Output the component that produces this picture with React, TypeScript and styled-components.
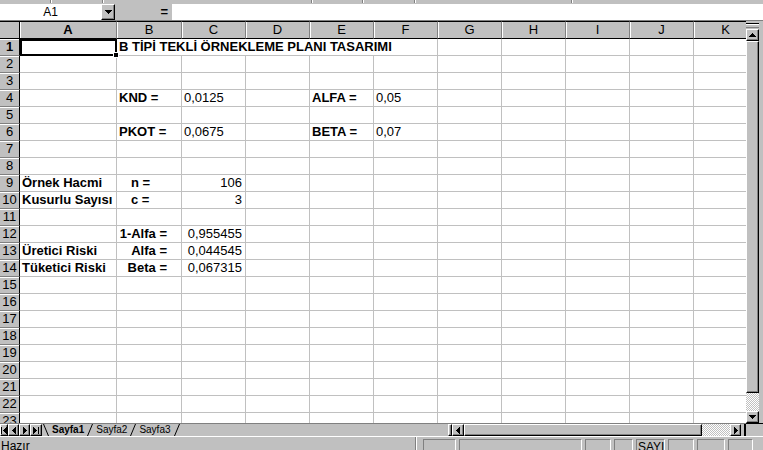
import React from 'react'
import styled, { createGlobalStyle, css } from 'styled-components'

const GlobalStyle = createGlobalStyle`
  html, body {
    margin: 0;
    padding: 0;
    background: #c0c0c0;
  }
  body {
    font-family: "Liberation Sans", Arial, sans-serif;
    font-size: 13px;
    color: #000;
  }
  * {
    box-sizing: border-box;
  }
`

const raised = css`
  background: #c0c0c0;
  border: 1px solid;
  border-color: #fff #000 #000 #fff;
  box-shadow: inset -1px -1px #808080;
`

const sunken = css`
  border: 1px solid;
  border-color: #808080 #fff #fff #808080;
`

const dither = css`
  background: repeating-conic-gradient(#fff 0 25%, #c0c0c0 0 50%) 0 0 / 2px 2px;
`

const Window = styled.div`
  width: 763px;
  height: 450px;
  overflow: hidden;
  background: #c0c0c0;
  display: flex;
  flex-direction: column;
`

const TopStrip = styled.div`
  flex: none;
  height: 3px;
  display: flex;
`

const ToolSeg = styled.div<{ $w: number }>`
  width: ${p => p.$w}px;
  border-right: 1px solid #808080;
  box-shadow: 1px 0 #fff;
`

const FormulaBar = styled.div`
  flex: none;
  height: 18px;
  display: flex;
  padding-top: 1px;
  border-bottom: 1px solid #808080;
`

const NameBox = styled.div`
  width: 101px;
  background: #fff;
  text-align: center;
  line-height: 16px;
  font-size: 12px;
`

const DropButton = styled.div`
  ${raised};
  width: 14px;
  display: flex;
  align-items: center;
  justify-content: center;
`

const EqualsBox = styled.div`
  width: 57px;
  text-align: right;
  padding-right: 4px;
  line-height: 16px;
  font-weight: bold;
`

const FormulaInput = styled.div`
  flex: 1;
  background: #fff;
`

const Main = styled.div`
  flex: none;
  height: 402px;
  display: flex;
`

const SheetView = styled.div`
  flex: none;
  width: 746px;
  overflow: hidden;
  background: #fff;
`

const Sheet = styled.div`
  display: grid;
  grid-template-columns: 20px 97px 65px repeat(9, 64px);
  grid-template-rows: 18px;
  grid-auto-rows: 17px;
  width: max-content;
`

const Corner = styled.div`
  background: #c0c0c0;
  border-top: 1px solid #000;
  border-bottom: 1px solid #000;
  border-right: 1px solid #000;
`

const ColHeader = styled.div<{ $active?: boolean }>`
  background: #c0c0c0;
  border-top: 1px solid #000;
  border-bottom: 1px solid #000;
  border-right: 1px solid #808080;
  box-shadow: inset 1px 0 #fff;
  text-align: center;
  line-height: 16px;
  font-weight: ${p => (p.$active ? 'bold' : 'normal')};
`

const RowHeader = styled.div<{ $active?: boolean }>`
  background: #c0c0c0;
  border-right: 1px solid #000;
  border-bottom: 1px solid #808080;
  box-shadow: inset 0 1px #fff;
  text-align: center;
  line-height: 16px;
  font-weight: ${p => (p.$active ? 'bold' : 'normal')};
`

const Cell = styled.div<{
  $bold?: boolean
  $align?: 'left' | 'right'
  $indent?: number
  $span?: number
  $selected?: boolean
}>`
  grid-column: span ${p => p.$span || 1};
  border-right: 1px solid #c0c0c0;
  border-bottom: 1px solid #c0c0c0;
  line-height: 16px;
  white-space: nowrap;
  font-weight: ${p => (p.$bold ? 'bold' : 'normal')};
  text-align: ${p => p.$align || 'left'};
  padding: ${p =>
    p.$align === 'right' ? `0 ${p.$indent ?? 3}px 0 0` : `0 0 0 ${p.$indent ?? 2}px`};
  ${p =>
    p.$selected &&
    css`
      position: relative;
      z-index: 2;
      &::after {
        content: '';
        position: absolute;
        left: 0;
        top: 0;
        right: -1px;
        bottom: -1px;
        border: 2px solid #000;
      }
    `}
`

const FillHandle = styled.div`
  position: absolute;
  right: -3px;
  bottom: -3px;
  width: 6px;
  height: 6px;
  background: #000;
  border: 1px solid #fff;
  z-index: 3;
`

const VScroll = styled.div`
  flex: none;
  width: 13px;
  display: flex;
  flex-direction: column;
`

const VSplitArea = styled.div`
  height: 8px;
  padding: 2px 0 1px;
  display: flex;
`

const VSplitNub = styled.div`
  flex: 1;
  border-top: 1px solid #000;
  border-bottom: 1px solid #808080;
  box-shadow: inset 0 1px #fff;
`

const ScrollButton = styled.div<{ $w?: number; $h?: number }>`
  ${raised};
  flex: none;
  width: ${p => (p.$w ? `${p.$w}px` : 'auto')};
  height: ${p => (p.$h ? `${p.$h}px` : 'auto')};
  display: flex;
  align-items: center;
  justify-content: center;
`

const Thumb = styled.div<{ $w?: number }>`
  ${raised};
  flex: ${p => (p.$w ? `none` : '1')};
  width: ${p => (p.$w ? `${p.$w}px` : 'auto')};
`

const Track = styled.div<{ $size: number; $vertical?: boolean }>`
  ${dither};
  flex: none;
  ${p => (p.$vertical ? `height: ${p.$size}px;` : `width: ${p.$size}px;`)}
`

const RightFrame = styled.div`
  flex: none;
  width: 4px;
`

const BottomBar = styled.div`
  flex: none;
  height: 14px;
  display: flex;
  border-bottom: 1px solid #fff;
`

const TabNav = styled.div`
  display: flex;
  border-top: 1px solid #808080;
`

const NavButton = styled.div<{ $w: number }>`
  ${raised};
  width: ${p => p.$w}px;
  display: flex;
  align-items: center;
  justify-content: center;
  gap: 1px;
`

const TabStrip = styled.div`
  flex: 1;
  display: flex;
  align-items: stretch;
  border-top: 1px solid #808080;
  font-size: 10px;
  padding-left: 1px;
`

const Tab = styled.div<{ $active?: boolean }>`
  font-weight: ${p => (p.$active ? 'bold' : 'normal')};
  line-height: 12px;
  padding: 0 3px;
`

const HScroll = styled.div`
  flex: none;
  width: 298px;
  display: flex;
  border-top: 1px solid #808080;
`

const HSplit = styled.div`
  ${raised};
  flex: none;
  width: 4px;
`

const HGap = styled.div`
  flex: none;
  width: 5px;
  border-right: 2px solid #000;
`

const ScrollCorner = styled.div`
  flex: none;
  width: 17px;
  border-top: 1px solid #000;
`

const StatusBar = styled.div`
  flex: none;
  height: 20px;
  display: flex;
  align-items: flex-start;
  padding-top: 2px;
  font-size: 12px;
  line-height: 14px;
`

const StatusText = styled.div`
  width: 415px;
  padding-left: 1px;
`

const StatusDivider = styled.div`
  width: 2px;
  height: 20px;
  margin-top: -2px;
  border-left: 1px solid #808080;
  border-right: 1px solid #fff;
  margin-right: 6px;
`

const StatusPanels = styled.div`
  display: flex;
  gap: 3px;
`

const StatusPanel = styled.div<{ $w: number }>`
  ${sunken};
  width: ${p => p.$w}px;
  height: 18px;
  padding-left: 1px;
`

type Dir = 'up' | 'down' | 'left' | 'right'

const Arrow = ({ dir, bar }: { dir: Dir; bar?: boolean }) => {
  if (dir === 'up' || dir === 'down') {
    const pts = dir === 'up' ? '3.5,0 7,4 0,4' : '0,0 7,0 3.5,4'
    return (
      <svg width="7" height="4" viewBox="0 0 7 4" shapeRendering="crispEdges">
        <polygon points={pts} fill="#000" />
      </svg>
    )
  }
  const pts = dir === 'left' ? '4,0 4,7 0,3.5' : '0,0 4,3.5 0,7'
  return (
    <>
      {bar && dir === 'left' && <svg width="1" height="7"><rect width="1" height="7" fill="#000" /></svg>}
      <svg width="4" height="7" viewBox="0 0 4 7" shapeRendering="crispEdges">
        <polygon points={pts} fill="#000" />
      </svg>
      {bar && dir === 'right' && <svg width="1" height="7"><rect width="1" height="7" fill="#000" /></svg>}
    </>
  )
}

const Slant = ({ back }: { back?: boolean }) => (
  <svg width="6" height="12" viewBox="0 0 6 12">
    <line
      x1={back ? 0.5 : 5.5}
      y1="0"
      x2={back ? 5.5 : 0.5}
      y2="12"
      stroke="#000"
      strokeWidth="1"
    />
  </svg>
)

type CellDef = {
  text: string
  bold?: boolean
  align?: 'left' | 'right'
  indent?: number
  span?: number
}

const COLS = ['A', 'B', 'C', 'D', 'E', 'F', 'G', 'H', 'I', 'J', 'K']
const ROW_COUNT = 23

const data: Record<number, Record<number, CellDef>> = {
  1: { 1: { text: 'B TİPİ TEKLİ ÖRNEKLEME PLANI TASARIMI', bold: true, span: 5 } },
  4: {
    1: { text: 'KND =', bold: true },
    2: { text: '0,0125' },
    4: { text: 'ALFA =', bold: true },
    5: { text: '0,05' },
  },
  6: {
    1: { text: 'PKOT =', bold: true },
    2: { text: '0,0675' },
    4: { text: 'BETA =', bold: true },
    5: { text: '0,07' },
  },
  9: {
    0: { text: 'Örnek Hacmi', bold: true },
    1: { text: 'n =', bold: true, indent: 14 },
    2: { text: '106', align: 'right' },
  },
  10: {
    0: { text: 'Kusurlu Sayısı', bold: true },
    1: { text: 'c =', bold: true, indent: 14 },
    2: { text: '3', align: 'right' },
  },
  12: {
    1: { text: '1-Alfa =', bold: true, align: 'right', indent: 14 },
    2: { text: '0,955455', align: 'right' },
  },
  13: {
    0: { text: 'Üretici Riski', bold: true },
    1: { text: 'Alfa =', bold: true, align: 'right', indent: 14 },
    2: { text: '0,044545', align: 'right' },
  },
  14: {
    0: { text: 'Tüketici Riski', bold: true },
    1: { text: 'Beta =', bold: true, align: 'right', indent: 14 },
    2: { text: '0,067315', align: 'right' },
  },
}

const renderRow = (r: number) => {
  const row = data[r] || {}
  const cells: React.ReactNode[] = []
  for (let c = 0; c < COLS.length; c++) {
    const d = row[c]
    const selected = r === 1 && c === 0
    cells.push(
      <Cell
        key={`${r}-${c}`}
        $bold={d?.bold}
        $align={d?.align}
        $indent={d?.indent}
        $span={d?.span}
        $selected={selected}
      >
        {d?.text}
        {selected && <FillHandle />}
      </Cell>
    )
    if (d?.span) c += d.span - 1
  }
  return (
    <React.Fragment key={r}>
      <RowHeader $active={r === 1}>{r}</RowHeader>
      {cells}
    </React.Fragment>
  )
}

const statusWidths = [33, 123, 26, 19, 29, 26, 28, 25]

export default function App() {
  return (
    <>
      <GlobalStyle />
      <Window>
        <TopStrip>
          {[51, 52, 209, 51, 52, 157].map((w, i) => (
            <ToolSeg key={i} $w={w} />
          ))}
        </TopStrip>

        <FormulaBar>
          <NameBox>A1</NameBox>
          <DropButton>
            <Arrow dir="down" />
          </DropButton>
          <EqualsBox>=</EqualsBox>
          <FormulaInput />
        </FormulaBar>

        <Main>
          <SheetView>
            <Sheet>
              <Corner />
              {COLS.map((c, i) => (
                <ColHeader key={c} $active={i === 0}>
                  {c}
                </ColHeader>
              ))}
              {Array.from({ length: ROW_COUNT }, (_, i) => renderRow(i + 1))}
            </Sheet>
          </SheetView>
          <VScroll>
            <VSplitArea>
              <VSplitNub />
            </VSplitArea>
            <ScrollButton $h={12}>
              <Arrow dir="up" />
            </ScrollButton>
            <Thumb />
            <Track $size={18} $vertical />
            <ScrollButton $h={12}>
              <Arrow dir="down" />
            </ScrollButton>
          </VScroll>
          <RightFrame />
        </Main>

        <BottomBar>
          <TabNav>
            <NavButton $w={8}>
              <Arrow dir="left" bar />
            </NavButton>
            <NavButton $w={11}>
              <Arrow dir="left" />
            </NavButton>
            <NavButton $w={11}>
              <Arrow dir="right" />
            </NavButton>
            <NavButton $w={12}>
              <Arrow dir="right" bar />
            </NavButton>
          </TabNav>
          <TabStrip>
            <Slant back />
            <Tab $active>Sayfa1</Tab>
            <Slant />
            <Tab>Sayfa2</Tab>
            <Slant />
            <Tab>Sayfa3</Tab>
            <Slant />
          </TabStrip>
          <HScroll>
            <HSplit />
            <ScrollButton $w={12}>
              <Arrow dir="left" />
            </ScrollButton>
            <Thumb $w={238} />
            <Track $size={28} />
            <ScrollButton $w={11}>
              <Arrow dir="right" />
            </ScrollButton>
            <HGap />
          </HScroll>
          <ScrollCorner />
        </BottomBar>

        <StatusBar>
          <StatusText>Hazır</StatusText>
          <StatusDivider />
          <StatusPanels>
            {statusWidths.map((w, i) => (
              <StatusPanel key={i} $w={w}>
                {i === 4 ? 'SAYI' : ''}
              </StatusPanel>
            ))}
          </StatusPanels>
        </StatusBar>
      </Window>
    </>
  )
}
